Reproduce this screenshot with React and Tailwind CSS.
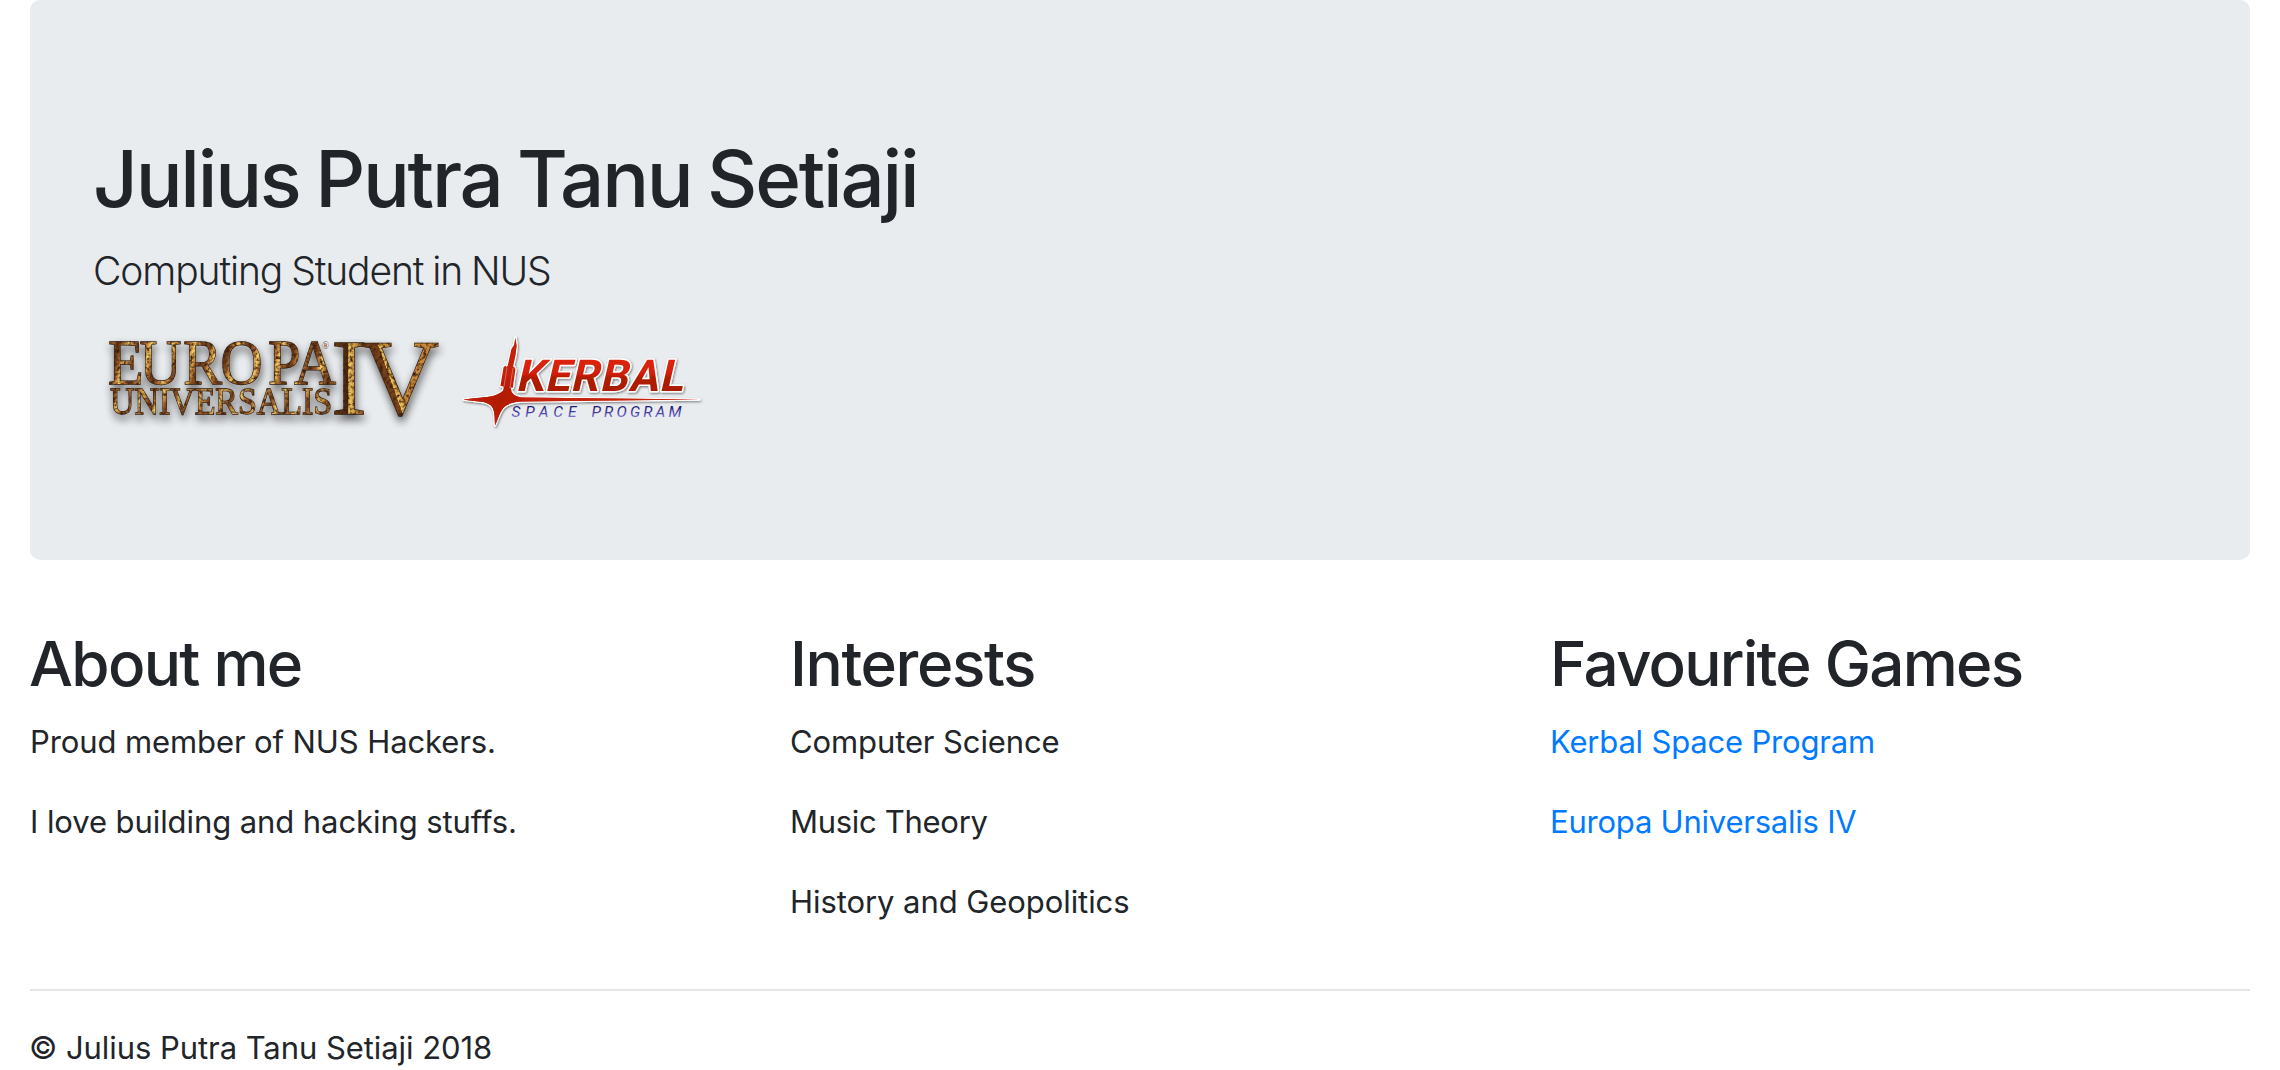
function EuropaLogo() {
  return (
    <svg viewBox="94 332 356 100" className="block h-[100px] w-[356px] overflow-visible" role="img">
      <defs>
        <linearGradient id="euBig" x1="0" y1="0" x2="11" y2="3" gradientUnits="userSpaceOnUse" spreadMethod="reflect">
          <stop offset="0" stopColor="#5c3214" />
          <stop offset="0.4" stopColor="#93592a" />
          <stop offset="0.7" stopColor="#c98a40" />
          <stop offset="1" stopColor="#f3d368" />
        </linearGradient>
        <linearGradient id="euSmall" x1="110" y1="0" x2="118" y2="4" gradientUnits="userSpaceOnUse" spreadMethod="reflect">
          <stop offset="0" stopColor="#6f3e1a" />
          <stop offset="0.5" stopColor="#b87837" />
          <stop offset="1" stopColor="#ecc868" />
        </linearGradient>
        <linearGradient id="euI" x1="333" y1="0" x2="364" y2="0" gradientUnits="userSpaceOnUse">
          <stop offset="0" stopColor="#6b3d1a" />
          <stop offset="0.47" stopColor="#4a2710" />
          <stop offset="0.51" stopColor="#efcf62" />
          <stop offset="0.62" stopColor="#e0ae50" />
          <stop offset="1" stopColor="#7d4820" />
        </linearGradient>
        <linearGradient id="euV" x1="372" y1="350" x2="386" y2="345" gradientUnits="userSpaceOnUse">
          <stop offset="0" stopColor="#6d3c18" />
          <stop offset="0.48" stopColor="#7a451b" />
          <stop offset="0.52" stopColor="#edc95c" />
          <stop offset="1" stopColor="#c8893a" />
        </linearGradient>
        <filter id="euMetal" x="-10%" y="-20%" width="120%" height="150%" colorInterpolationFilters="sRGB">
          <feTurbulence type="fractalNoise" baseFrequency="0.3" numOctaves="2" seed="4" result="noise" />
          <feColorMatrix in="noise" type="matrix" values="0 0 0 0 0.24  0 0 0 0 0.12  0 0 0 0 0.05  2.8 0 0 0 -1.2" result="grit" />
          <feComposite in="grit" in2="SourceAlpha" operator="in" result="patina" />
          <feMerge result="metal">
            <feMergeNode in="SourceGraphic" />
            <feMergeNode in="patina" />
          </feMerge>
          <feGaussianBlur in="SourceAlpha" stdDeviation="4" result="soft" />
          <feOffset in="soft" dx="1" dy="5" result="low" />
          <feComponentTransfer in="low" result="shade">
            <feFuncA type="linear" slope="0.65" />
          </feComponentTransfer>
          <feMerge>
            <feMergeNode in="shade" />
            <feMergeNode in="metal" />
          </feMerge>
        </filter>
      </defs>
      <g filter="url(#euMetal)" className="font-['Liberation_Serif',serif]" stroke="#33200f" strokeWidth="1.3" paintOrder="stroke">
        <text
          transform="translate(108 383.7) scale(0.93 1)"
          x="0 34 81 121 172 200"
          y="0"
          fontSize="62.5"
          fill="url(#euBig)"
        >
          EUROPA
        </text>
        <text x="110" y="414.3" fontSize="38" textLength="222" lengthAdjust="spacingAndGlyphs" fill="url(#euSmall)">
          UNIVERSALIS
        </text>
        <text x="331 361" y="413.7" fontSize="108" fill="url(#euI)">
          I<tspan fill="url(#euV)">V</tspan>
        </text>
      </g>
      <text x="322" y="349" fontSize="9.5" fill="#6b4422" className="font-['Liberation_Serif',serif]">
        ®
      </text>
    </svg>
  );
}

const STAR =
  "M463.5 399.5 C475 397.8 486 397.5 493 396 C499 394.5 503 391.5 505 388 L511 388 C511 393 514 396.5 522 397.6 L699.5 399.6 L522 401.6 C511 402.4 506 404.5 502.5 409 C499 414 498 419 495 425.5 C494.6 419 495 413 493 408.5 C491 404.5 487 402.6 481 401.8 C475 401 469 400.4 463.5 399.5 Z";
const ROCKET =
  "M515.4 337.5 L514 345 L511.4 349 L509 360 L507.6 366 L506.8 367 L505.4 365.8 L503.6 367 L500.4 386 L503.6 386.5 L503.2 392 L511 392 L509.6 387.4 L512.8 387.8 L515.4 369.5 L514 366.5 L513 367 L515.8 354 L516.2 349.5 L516.8 346 Z";

function KerbalLogo() {
  return (
    <svg viewBox="450 332 270 100" className="block h-[100px] w-[270px] overflow-visible" role="img">
      <defs>
        <linearGradient id="kspWord" x1="0" y1="-31" x2="0" y2="0" gradientUnits="userSpaceOnUse">
          <stop offset="0" stopColor="#dd2409" />
          <stop offset="0.45" stopColor="#d01f07" />
          <stop offset="0.55" stopColor="#b01c04" />
          <stop offset="1" stopColor="#ab1c04" />
        </linearGradient>
        <radialGradient id="kspStar" cx="501" cy="400" r="26" gradientUnits="userSpaceOnUse">
          <stop offset="0" stopColor="#b01b04" />
          <stop offset="0.6" stopColor="#b81d06" />
          <stop offset="1" stopColor="#c4200a" />
        </radialGradient>
        <linearGradient id="kspBlue" x1="0" y1="406" x2="0" y2="418" gradientUnits="userSpaceOnUse">
          <stop offset="0" stopColor="#1d1766" />
          <stop offset="0.5" stopColor="#4039a0" />
          <stop offset="1" stopColor="#8480cc" />
        </linearGradient>
        <filter id="kspShadow" x="-10%" y="-15%" width="120%" height="135%">
          <feDropShadow dx="0.8" dy="1.2" stdDeviation="1.1" floodColor="#000000" floodOpacity="0.5" />
        </filter>
      </defs>
      <g filter="url(#kspShadow)">
        <g fill="url(#kspStar)" stroke="#ffffff" strokeWidth="2.4" strokeLinejoin="round" paintOrder="stroke">
          <path d={STAR} />
          <path d={ROCKET} />
        </g>
        <path d={STAR} fill="url(#kspStar)" />
        <path d="M507 367.5 L504 386.6 M513 368 L510 387.6" stroke="#ec9a8c" strokeWidth="0.6" fill="none" />
        <text
          transform="translate(515.5 391.4) skewX(-13)"
          fontSize="44"
          fontWeight="700"
          textLength="167"
          lengthAdjust="spacing"
          fill="url(#kspWord)"
          stroke="#ffffff"
          strokeWidth="3"
          strokeLinejoin="round"
          paintOrder="stroke"
          className="font-['Roboto',sans-serif]"
        >
          KERBAL
        </text>
      </g>
      <g fill="url(#kspBlue)" fontSize="15.4" fontStyle="italic" fontWeight="400" className="font-['Roboto',sans-serif]">
        <text x="511.5" y="417" textLength="65">
          SPACE
        </text>
        <text x="591.5" y="417" textLength="90">
          PROGRAM
        </text>
      </g>
    </svg>
  );
}

function Column({ title, titleClass, children }) {
  return (
    <section className="px-[30px]">
      <h2 className={`mb-4 text-[62px] leading-[77px] font-medium ${titleClass}`}>{title}</h2>
      {children}
    </section>
  );
}

export default function App() {
  return (
    <div className="h-[1070px] overflow-hidden bg-white font-['Inter',sans-serif] text-[31px] leading-[48px] text-[#212529]">
      <header className="mx-[30px] mb-[65px] h-[560px] rounded-[10px] bg-[#e9ecef] px-16 pt-[131px]">
        <h1 className="-ml-px mb-3.5 text-[78px] leading-[96px] font-medium tracking-[-2.24px] whitespace-nowrap [word-spacing:-3px]">
          Julius Putra Tanu Setiaji
        </h1>
        <p className="-ml-px mb-[31px] text-[39px] leading-[60px] font-light tracking-[-1.1px] [word-spacing:-1px]">
          Computing Student in NUS
        </p>
        <div className="flex">
          <EuropaLogo />
          <KerbalLogo />
        </div>
      </header>

      <main className="grid grid-cols-3">
        <Column title="About me" titleClass="-ml-px tracking-[-1.7px]">
          <p className="mb-8 tracking-[-0.1px]">Proud member of NUS Hackers.</p>
          <p className="mb-8 tracking-[-0.08px]">I love building and hacking stuffs.</p>
        </Column>
        <Column title="Interests" titleClass="tracking-[-1.4px]">
          <p className="mb-8 tracking-[-0.11px]">Computer Science</p>
          <p className="mb-8 tracking-[-0.3px]">Music Theory</p>
          <p className="mb-8 tracking-[-0.07px]">History and Geopolitics</p>
        </Column>
        <Column title="Favourite Games" titleClass="tracking-[-1.77px]">
          <p className="mb-8 tracking-[-0.18px]">
            <a href="#kerbal" className="text-[#007bff]">Kerbal Space Program</a>
          </p>
          <p className="mb-8 tracking-[-0.22px]">
            <a href="#europa" className="text-[#007bff]">Europa Universalis IV</a>
          </p>
        </Column>
      </main>

      <footer className="mx-[30px] mt-[31px] border-t-2 border-[#e5e5e5] pt-[33px]">
        <p className="-ml-px tracking-[-0.06px]">© Julius Putra Tanu Setiaji 2018</p>
      </footer>
    </div>
  );
}
